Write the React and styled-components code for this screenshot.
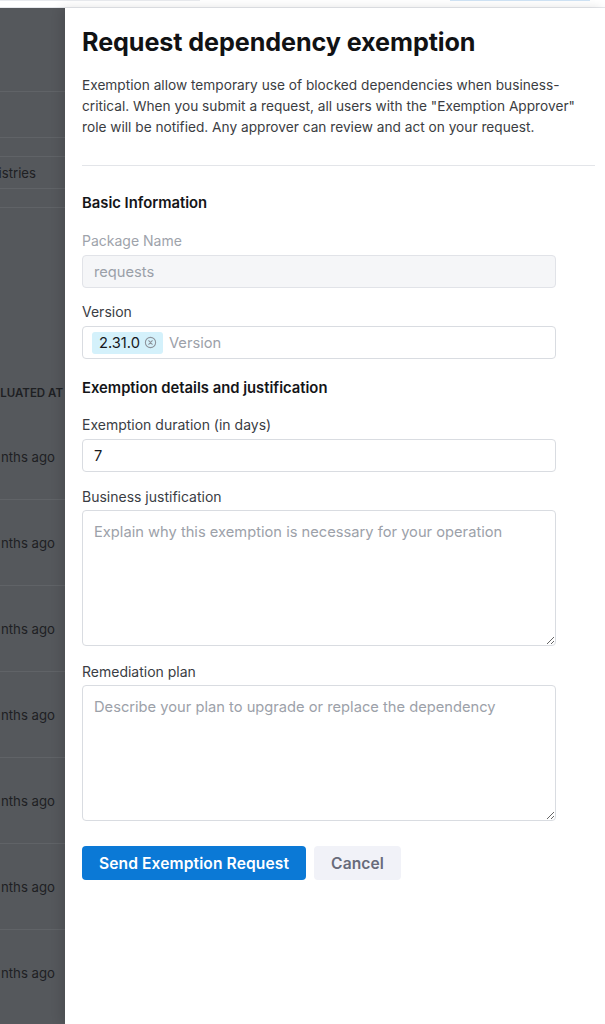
import React from 'react';
import styled, {createGlobalStyle} from 'styled-components';

const GlobalStyle = createGlobalStyle`
  html, body {
    margin: 0;
    padding: 0;
    background: #ffffff;
    font-family: Inter, "Noto Sans", "Liberation Sans", sans-serif;
    -webkit-font-smoothing: antialiased;
  }
  * { box-sizing: border-box; }
`;

const Page = styled.div`
  width: 605px;
  height: 1024px;
  display: flex;
  flex-direction: column;
  overflow: hidden;
`;

const TopStrip = styled.div`
  height: 8px;
  flex: none;
  display: flex;
  justify-content: space-between;
  align-items: flex-start;
  border-bottom: 1px solid #e6e8ec;
  background: #fff;
`;

const StripShape = styled.div`
  width: ${p => p.w}px;
  margin: ${p => p.m};
  height: 1px;
  background: ${p => p.c};
`;

const Main = styled.div`
  flex: 1;
  display: flex;
  min-height: 0;
`;

// page behind the drawer, dimmed; only the right edge of its table shows
const Overlay = styled.div`
  width: 65px;
  flex: none;
  background: #55585c;
  display: flex;
  flex-direction: column;
  overflow: hidden;
`;

const OverlayRow = styled.div`
  height: ${p => p.h}px;
  flex: none;
  display: flex;
  align-items: center;
  justify-content: flex-end;
  padding-right: ${p => p.pr || 0}px;
  border-bottom: ${p => (p.line ? '1px solid #606367' : 'none')};
  white-space: nowrap;
  font-size: ${p => (p.head ? 11.5 : 13.2)}px;
  font-weight: ${p => (p.head ? 600 : 400)};
  color: #1e2023;
`;

const Drawer = styled.div`
  flex: 1;
  background: #fff;
  box-shadow: -4px 0 10px rgba(0, 0, 0, 0.12);
  padding: 19px 10px 0 17px;
  display: flex;
  flex-direction: column;
`;

const Title = styled.h1`
  margin: 0;
  font-size: 25.2px;
  line-height: 30px;
  font-weight: 700;
  color: #111214;
  letter-spacing: -0.1px;
`;

const Intro = styled.p`
  margin: 18px 0 0;
  width: 495px;
  font-size: 13.7px;
  line-height: 21px;
  color: #3b3d42;
`;

const Divider = styled.hr`
  margin: 27px 0 0;
  border: none;
  border-top: 1px solid #e3e5e9;
`;

const Form = styled.form`
  width: 474px;
  display: flex;
  flex-direction: column;
`;

const SectionTitle = styled.h3`
  margin: ${p => p.mt}px 0 0;
  font-size: 14.8px;
  line-height: 20px;
  font-weight: 600;
  color: #141518;
`;

const Field = styled.div`
  margin-top: ${p => p.mt}px;
  display: flex;
  flex-direction: column;
  gap: ${p => p.gap || 4}px;
`;

const Label = styled.label`
  font-size: 14px;
  line-height: 20px;
  color: ${p => (p.disabled ? '#9ea3ab' : '#3a3d44')};
`;

const TextInput = styled.input`
  height: 33px;
  width: 100%;
  border: 1px solid ${p => (p.disabled ? '#e1e3e8' : '#d9dce1')};
  border-radius: 4px;
  background: ${p => (p.disabled ? '#f5f6f8' : '#fff')};
  padding: 0 11px;
  font-family: inherit;
  font-size: 14.7px;
  color: ${p => (p.disabled ? '#9aa0a8' : '#1a1b1e')};
  outline: none;
  &:disabled { -webkit-text-fill-color: #9aa0a8; opacity: 1; }
`;

const TagBox = styled.div`
  height: 33px;
  border: 1px solid #d9dce1;
  border-radius: 4px;
  display: flex;
  align-items: center;
  gap: 6px;
  padding: 0 9px;
`;

const Chip = styled.span`
  height: 22px;
  display: inline-flex;
  align-items: center;
  gap: 4px;
  padding: 0 6px 0 7px;
  border-radius: 3px;
  background: #d4f1fb;
  font-size: 14.7px;
  color: #16181b;
`;

const Placeholder = styled.span`
  font-size: 14.7px;
  color: #9ca1a9;
`;

const TextArea = styled.textarea`
  height: 136px;
  width: 100%;
  border: 1px solid #d9dce1;
  border-radius: 4px;
  padding: 11px 11px;
  font-family: inherit;
  font-size: 14.7px;
  line-height: 20px;
  color: #1a1b1e;
  resize: vertical;
  outline: none;
  &::placeholder { color: #9ca1a9; }
`;

const Actions = styled.div`
  margin-top: 25px;
  display: flex;
  gap: 8px;
`;

const Button = styled.button`
  height: 34px;
  padding: 0 17px;
  border: none;
  border-radius: 4px;
  background: ${p => (p.primary ? '#0b79d6' : '#f1f2f8')};
  color: ${p => (p.primary ? '#fff' : '#686b7b')};
  font-family: inherit;
  font-size: 15.6px;
  font-weight: 600;
  letter-spacing: 0.1px;
  cursor: pointer;
`;

const ClearIcon = () => (
  <svg width="13" height="13" viewBox="0 0 16 16" fill="none" stroke="#8d939b" strokeWidth="1.3">
    <circle cx="8" cy="8" r="6.3" />
    <path d="M5.8 5.8l4.4 4.4M10.2 5.8l-4.4 4.4" strokeLinecap="round" />
  </svg>
);

const monthRows = [1, 2, 3, 4, 5, 6, 7];

export default function App() {
  return (
    <Page>
      <GlobalStyle />
      <TopStrip>
        <StripShape w={200} m="0 0 0 0" c="#e8eaee" />
        <StripShape w={140} m="0 15px 0 0" c="#cfe3f5" />
      </TopStrip>
      <Main>
        <Overlay>
          <OverlayRow h={84} line />
          <OverlayRow h={46} line />
          <OverlayRow h={19} line />
          <OverlayRow h={32} line pr={29}>istries</OverlayRow>
          <OverlayRow h={19} line />
          <OverlayRow h={164} />
          <OverlayRow h={42} head pr={2}>LUATED AT</OverlayRow>
          {monthRows.map(i => (
            <OverlayRow key={i} h={86} line={i < 7} pr={10}>nths ago</OverlayRow>
          ))}
        </Overlay>
        <Drawer>
          <Title>Request dependency exemption</Title>
          <Intro>
            Exemption allow temporary use of blocked dependencies when business-critical. When you submit a request, all users with the "Exemption Approver" role will be notified. Any approver can review and act on your request.
          </Intro>
          <Divider />
          <Form onSubmit={e => e.preventDefault()}>
            <SectionTitle mt={27}>Basic Information</SectionTitle>
            <Field mt={18}>
              <Label disabled>Package Name</Label>
              <TextInput disabled value="requests" readOnly />
            </Field>
            <Field mt={14}>
              <Label>Version</Label>
              <TagBox>
                <Chip>2.31.0 <ClearIcon /></Chip>
                <Placeholder>Version</Placeholder>
              </TagBox>
            </Field>
            <SectionTitle mt={19}>Exemption details and justification</SectionTitle>
            <Field mt={17}>
              <Label>Exemption duration (in days)</Label>
              <TextInput defaultValue="7" />
            </Field>
            <Field mt={15} gap={3}>
              <Label>Business justification</Label>
              <TextArea placeholder="Explain why this exemption is necessary for your operation" />
            </Field>
            <Field mt={16} gap={3}>
              <Label>Remediation plan</Label>
              <TextArea placeholder="Describe your plan to upgrade or replace the dependency" />
            </Field>
            <Actions>
              <Button primary type="submit">Send Exemption Request</Button>
              <Button type="button">Cancel</Button>
            </Actions>
          </Form>
        </Drawer>
      </Main>
    </Page>
  );
}
